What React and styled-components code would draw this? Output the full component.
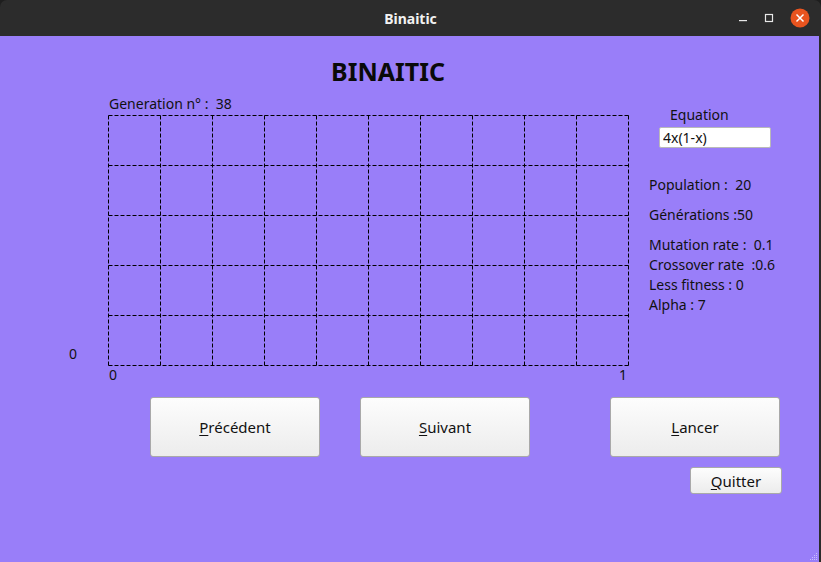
import React from 'react'
import styled, { createGlobalStyle } from 'styled-components'

const GlobalStyle = createGlobalStyle`
  html, body {
    margin: 0;
    padding: 0;
    background: #1e1e1e;
  }
  body {
    font-family: "Noto Sans", "DejaVu Sans", sans-serif;
  }
`

const Window = styled.div`
  width: 821px;
  height: 562px;
  display: flex;
  flex-direction: column;
  overflow: hidden;
  border-radius: 7px 7px 0 0;
`
const TitleBar = styled.div`
  position: relative;
  height: 36px;
  flex: none;
  display: flex;
  align-items: center;
  justify-content: center;
  background: #2c2c2c;
  color: #f2f2f2;
  font-size: 14px;
  font-weight: 700;
`
const Controls = styled.div`
  position: absolute;
  top: 0;
  right: 11px;
  height: 36px;
  display: flex;
  align-items: center;
  gap: 16px;
`
const Body = styled.div`
  position: relative;
  flex: 1;
  background: #997ef9;
  border-right: 2px solid #2b2b2b;
  color: #111;
  font-size: 14px;
`
const Title = styled.h1`
  margin: 21px 0 0;
  width: 776px;
  text-align: center;
  font-size: 25px;
  line-height: 28px;
  font-weight: 700;
  color: #0a0a0a;
`
const Main = styled.div`
  display: grid;
  grid-template-columns: 108px 521px 1fr;
  margin-top: 11px;
`
const YAxis = styled.div`
  display: flex;
  flex-direction: column;
  justify-content: flex-end;
  padding: 0 0 21px 69px;
  line-height: 16px;
`
const ChartColumn = styled.div`
  display: flex;
  flex-direction: column;
`
const Label = styled.div`
  line-height: 16px;
  white-space: pre;
  margin-left: ${(p) => p.$indent || 0}px;
`
const Chart = styled.svg`
  display: block;
  margin-top: 3px;
`
const XAxis = styled.div`
  display: flex;
  justify-content: space-between;
  margin-top: 1px;
  padding: 0 2px 0 1px;
  line-height: 16px;
`
const Panel = styled.div`
  display: flex;
  flex-direction: column;
  align-items: flex-start;
  padding: 9px 0 0 20px;
`
const Stat = styled.div`
  line-height: 20px;
  white-space: pre;
  margin-top: ${(p) => p.$gap || 0}px;
  margin-left: ${(p) => p.$indent || 0}px;
`
const Input = styled.input`
  box-sizing: border-box;
  width: 112px;
  height: 21px;
  margin: 2px 0 0 10px;
  padding: 0 3px;
  border: 1px solid #b9b9b9;
  border-radius: 2px;
  background: #fff;
  font: inherit;
  color: #111;
  outline: none;
`
const ButtonRow = styled.div`
  display: flex;
  margin: 14px 0 0 150px;
`
const Button = styled.button`
  box-sizing: border-box;
  width: ${(p) => p.$w || 170}px;
  height: ${(p) => p.$h || 60}px;
  margin-left: ${(p) => p.$push || 0}px;
  padding: 0;
  border: 1px solid #a9a9a9;
  border-radius: 3px;
  background: linear-gradient(#fdfdfd, #ececec);
  font-family: "Noto Sans", "DejaVu Sans", sans-serif;
  font-size: 15px;
  color: #111;
`
const Mnemonic = styled.span`
  text-decoration: underline;
  text-underline-offset: 2px;
`
const QuitRow = styled.div`
  display: flex;
  margin: 10px 0 0 690px;
`
const Grip = styled.svg`
  position: absolute;
  right: 1px;
  bottom: 1px;
`

function Grid() {
  const cols = Array.from({ length: 11 }, (_, i) => i * 52 + 0.5)
  const rows = Array.from({ length: 6 }, (_, i) => i * 50 + 0.5)
  return (
    <Chart width="521" height="251" viewBox="0 0 521 251">
      <g stroke="#000" strokeWidth="1" strokeDasharray="4 2" fill="none">
        {rows.map((y) => (
          <line key={'r' + y} x1="0.5" y1={y} x2="520.5" y2={y} />
        ))}
        {cols.map((x) => (
          <line key={'c' + x} x1={x} y1="0.5" x2={x} y2="250.5" />
        ))}
      </g>
    </Chart>
  )
}

function WindowControls() {
  return (
    <Controls>
      <svg width="10" height="10" viewBox="0 0 10 10">
        <rect x="1" y="7" width="8" height="1.2" fill="#e8e8e8" />
      </svg>
      <svg width="10" height="10" viewBox="0 0 10 10">
        <rect x="1.5" y="1.5" width="7" height="7" stroke="#e8e8e8" strokeWidth="1.2" fill="none" />
      </svg>
      <svg width="20" height="20" viewBox="0 0 20 20">
        <circle cx="10" cy="10" r="9.5" fill="#e9541f" />
        <path d="M6.5 6.5 L13.5 13.5 M13.5 6.5 L6.5 13.5" stroke="#fff" strokeWidth="1.5" />
      </svg>
    </Controls>
  )
}

export default function App() {
  return (
    <Window>
      <GlobalStyle />
      <TitleBar>
        Binaitic
        <WindowControls />
      </TitleBar>
      <Body>
        <Title>BINAITIC</Title>
        <Main>
          <YAxis>
            <Label>0</Label>
          </YAxis>
          <ChartColumn>
            <Label $indent={1}>{'Generation n° :  38'}</Label>
            <Grid />
            <XAxis>
              <span>0</span>
              <span>1</span>
            </XAxis>
          </ChartColumn>
          <Panel>
            <Stat $indent={21}>Equation</Stat>
            <Input defaultValue="4x(1-x)" />
            <Stat $gap={27}>{'Population :  20'}</Stat>
            <Stat $gap={10}>{'Générations :50'}</Stat>
            <Stat $gap={10}>{'Mutation rate :  0.1'}</Stat>
            <Stat>{'Crossover rate  :0.6'}</Stat>
            <Stat>{'Less fitness : 0'}</Stat>
            <Stat>{'Alpha : 7'}</Stat>
          </Panel>
        </Main>
        <ButtonRow>
          <Button>
            <Mnemonic>P</Mnemonic>récédent
          </Button>
          <Button $push={40}>
            <Mnemonic>S</Mnemonic>uivant
          </Button>
          <Button $push={80}>
            <Mnemonic>L</Mnemonic>ancer
          </Button>
        </ButtonRow>
        <QuitRow>
          <Button $w={92} $h={27}>
            <Mnemonic>Q</Mnemonic>uitter
          </Button>
        </QuitRow>
        <Grip width="10" height="10" viewBox="0 0 10 10">
          <g fill="#c9bffc">
            <rect x="8" y="2" width="1" height="1" />
            <rect x="6" y="4" width="1" height="1" />
            <rect x="8" y="4" width="1" height="1" />
            <rect x="4" y="6" width="1" height="1" />
            <rect x="6" y="6" width="1" height="1" />
            <rect x="8" y="6" width="1" height="1" />
            <rect x="2" y="8" width="1" height="1" />
            <rect x="4" y="8" width="1" height="1" />
            <rect x="6" y="8" width="1" height="1" />
            <rect x="8" y="8" width="1" height="1" />
          </g>
        </Grip>
      </Body>
    </Window>
  )
}
